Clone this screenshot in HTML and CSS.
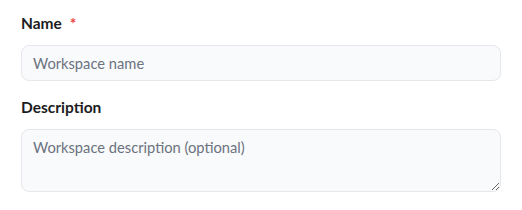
FILE: index.html
```html
<!DOCTYPE html>
<html>
<head>
<meta charset="utf-8">
<link rel="stylesheet" href="styles.css">
</head>
<body>
<form class="form">
  <div class="field">
    <label class="label" for="name">Name <span class="req">*</span></label>
    <input class="input" id="name" type="text" placeholder="Workspace name">
  </div>
  <div class="field">
    <label class="label" for="desc">Description</label>
    <textarea class="textarea" id="desc" placeholder="Workspace description (optional)"></textarea>
  </div>
</form>
</body>
</html>
```
FILE: styles.css
```css
html, body {
  margin: 0;
  padding: 0;
  background: #ffffff;
}
body {
  font-family: Lato, "Open Sans", sans-serif;
  color: #111827;
}
.form {
  display: flex;
  flex-direction: column;
  gap: 14px;
  padding: 11px 21px 0 21px;
}
.field {
  display: flex;
  flex-direction: column;
  gap: 10px;
}
.label {
  font-size: 15.5px;
  line-height: 24px;
  font-weight: 700;
  color: #1c1c22;
}
.req {
  color: #ef4444;
  margin-left: 4px;
}
.input, .textarea {
  box-sizing: border-box;
  width: 480px;
  border: 1px solid #e5e7eb;
  border-radius: 8px;
  background: #f9fafb;
  font-family: inherit;
  font-size: 14.7px;
  color: #111827;
  padding: 0 11px;
  margin: 0;
  outline: none;
}
.input {
  height: 36px;
}
.textarea {
  height: 63px;
  padding-top: 8px;
  resize: vertical;
  display: block;
}
.input::placeholder, .textarea::placeholder {
  color: #6b7280;
  opacity: 1;
}
```
